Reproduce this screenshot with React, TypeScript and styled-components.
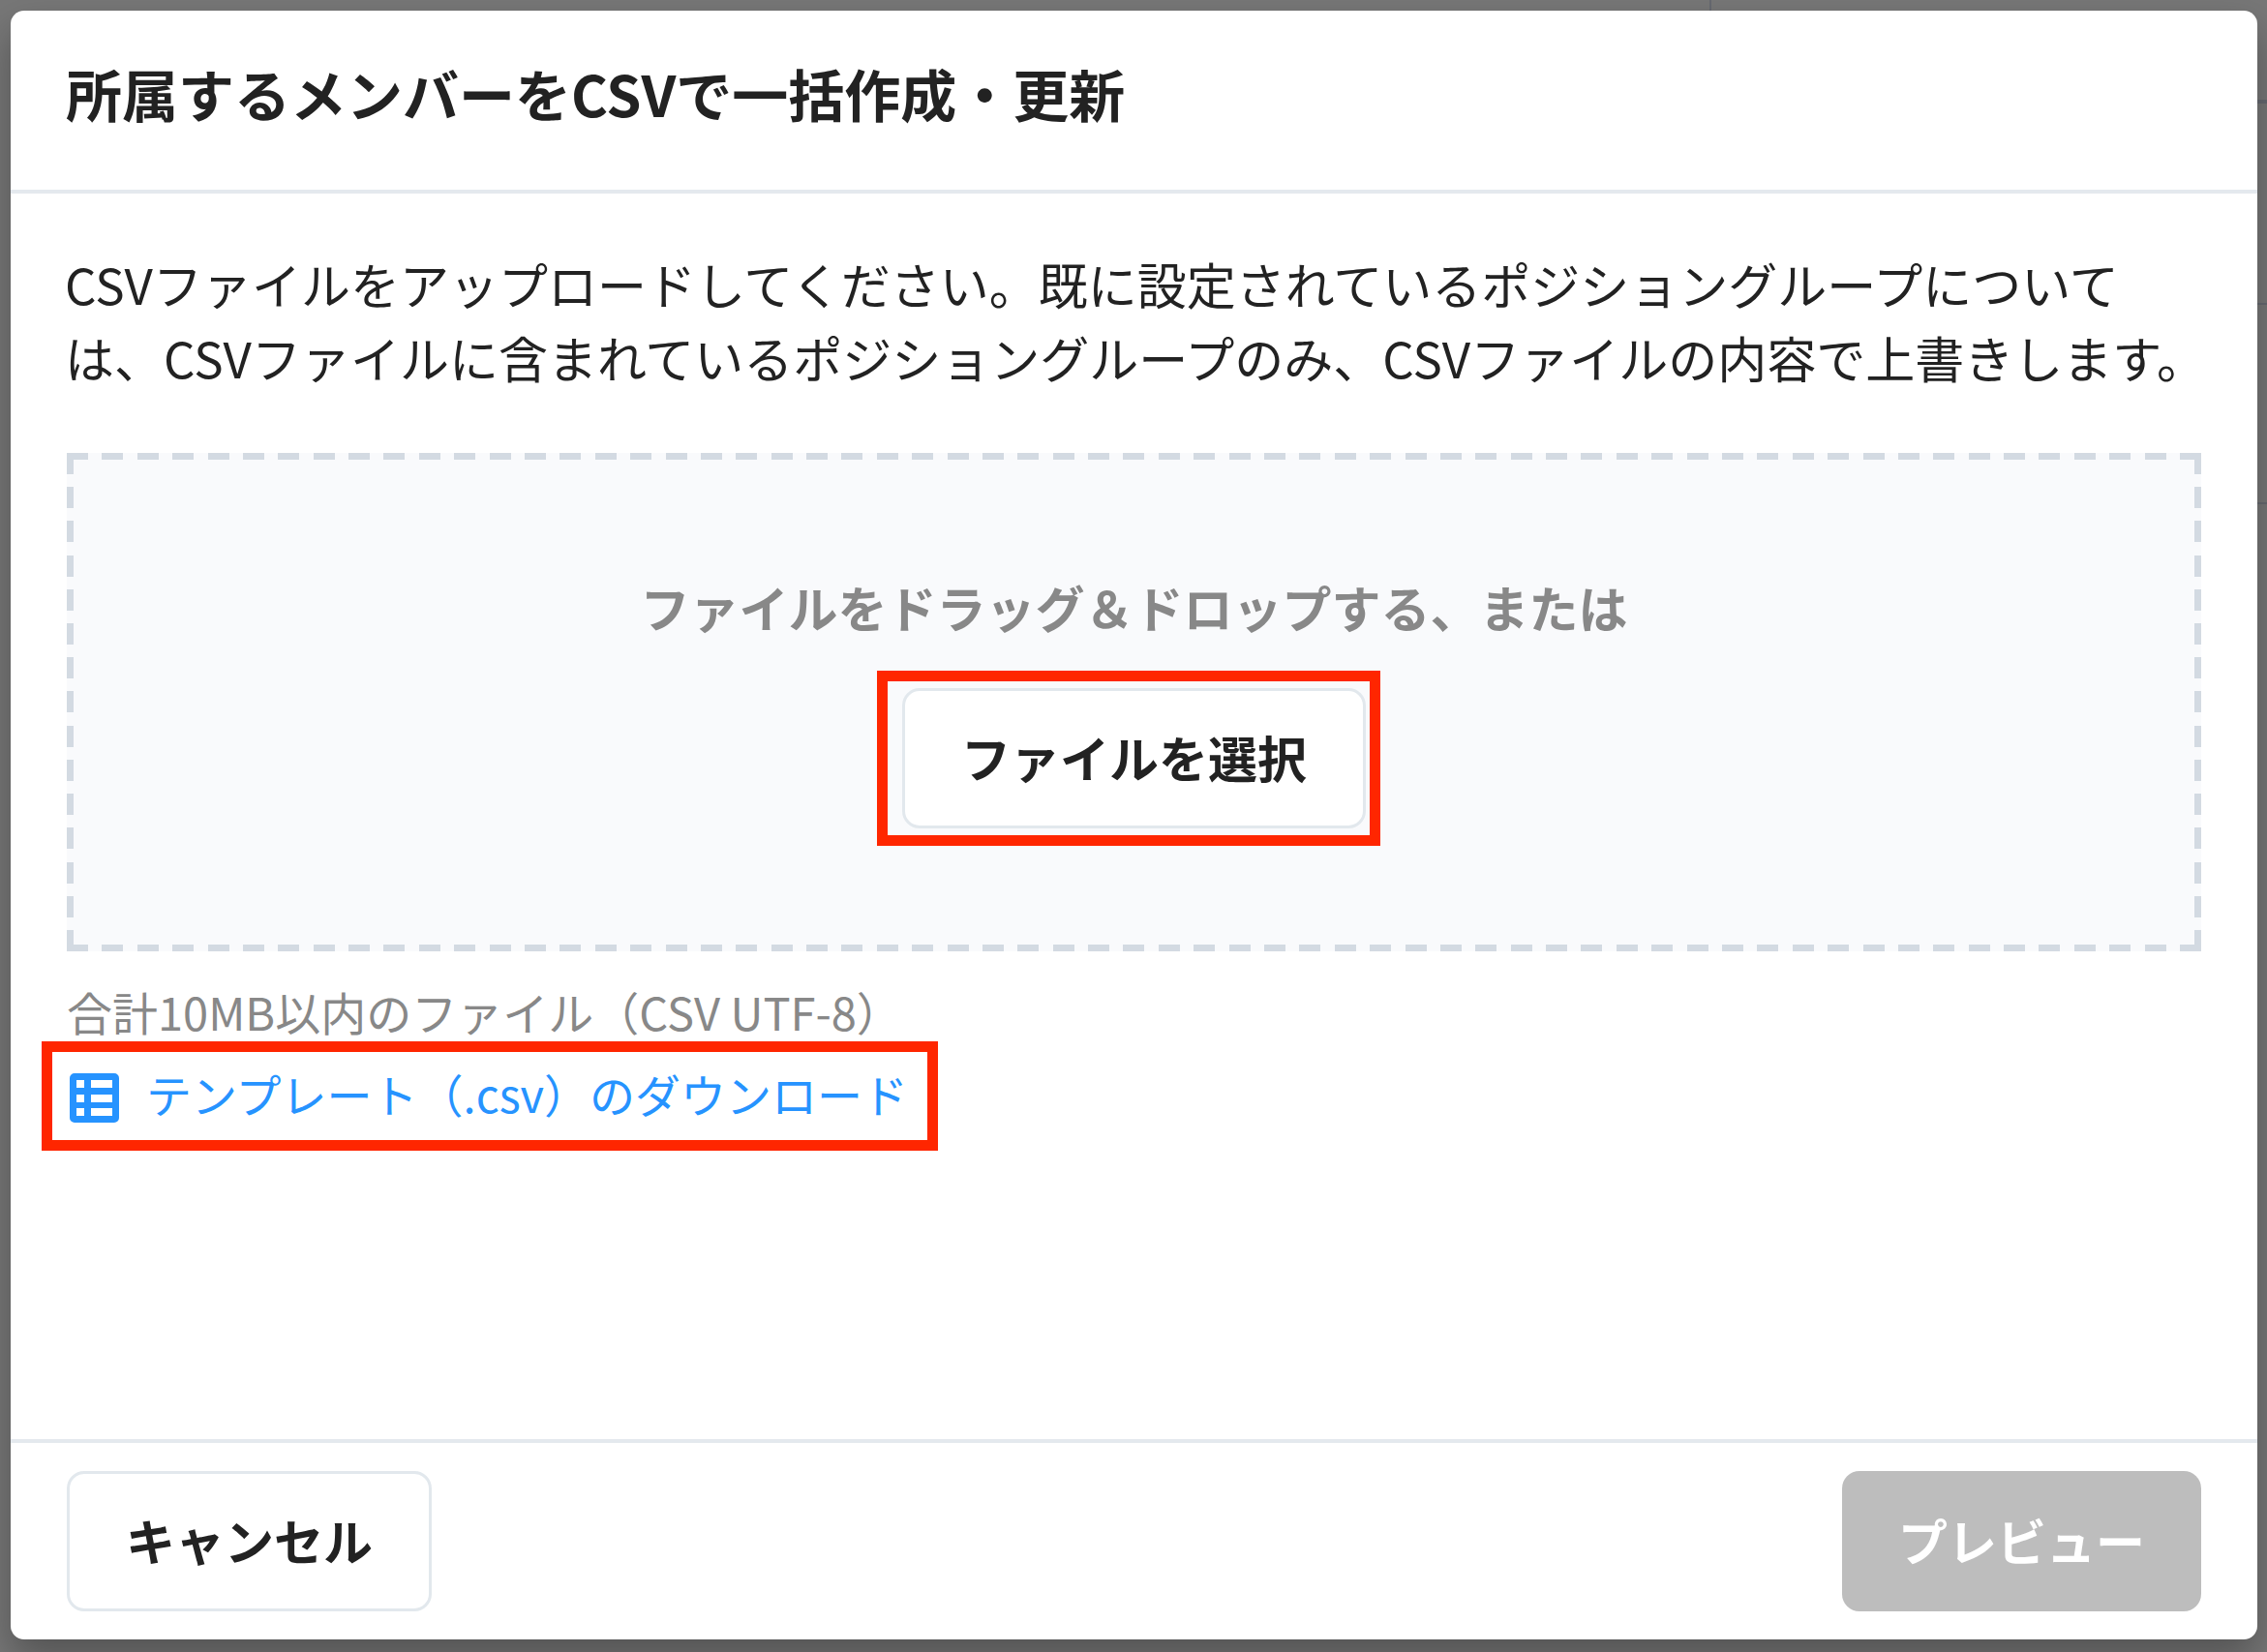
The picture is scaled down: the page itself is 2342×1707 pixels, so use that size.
import React from "react";
import styled, { createGlobalStyle } from "styled-components";

const GlobalStyle = createGlobalStyle`
  *, *::before, *::after { box-sizing: border-box; }
  body {
    margin: 0;
    background: #777777;
    color: #222222;
    font-family: "Noto Sans CJK JP", "Noto Sans", sans-serif;
    font-size: 51px;
    line-height: 76px;
  }
  button { font: inherit; }
  h1, p { margin: 0; }
`;

/* The dimmed page behind the dialog keeps faint traces of its column and row rules. */
const Backdrop = styled.div`
  --rule: linear-gradient(#666970, #666970);
  display: flex;
  min-height: 100vh;
  padding: 11px 10px 13px 11px;
  overflow: hidden;
  background:
    var(--rule) right 574px top 0 / 2px 11px no-repeat,
    var(--rule) right 0 top 103px / 10px 4px no-repeat,
    var(--rule) right 0 top 313px / 10px 2px no-repeat,
    var(--rule) right 0 top 519px / 10px 2px no-repeat,
    #777777;
`;

const Dialog = styled.section`
  display: flex;
  flex: 1;
  flex-direction: column;
  min-width: 0;
  border-radius: 14px;
  background: #ffffff;
  box-shadow: 0 20px 40px rgba(0, 0, 0, 0.3);
`;

const Header = styled.header`
  padding: 41px 57px 56px;
  border-bottom: 4px solid #e4e9ee;
`;

const Title = styled.h1`
  font-size: 58px;
  line-height: 88px;
  font-weight: 700;
`;

const Body = styled.div`
  display: flex;
  flex: 1;
  flex-direction: column;
  align-items: flex-start;
  padding: 55px 58px;
`;

const Description = styled.p`
  align-self: stretch;
  margin: 0 -24px 0 -2px;
`;

const DropZone = styled.div`
  --dash: #d3dae2;
  --across: repeating-linear-gradient(90deg, var(--dash) 0 22px, transparent 22px calc((100% - 22px) / 60));
  --down: repeating-linear-gradient(180deg, var(--dash) 0 22px, transparent 22px calc((100% - 22px) / 14));
  display: flex;
  flex-direction: column;
  align-items: center;
  align-self: stretch;
  gap: 28px;
  margin-top: 61px;
  padding: 121px 0 109px;
  background:
    var(--across) top / 100% 7px no-repeat,
    var(--across) bottom / 100% 7px no-repeat,
    var(--down) left / 7px 100% no-repeat,
    var(--down) right / 7px 100% no-repeat,
    #f9fafc;
`;

const DropText = styled.p`
  color: #888888;
  font-weight: 700;
`;

const Highlight = styled.div`
  border: 11px solid #ff2600;
`;

const PickerHighlight = styled(Highlight)`
  margin-right: 11px;
  padding: 7px 4px 7px 15px;
`;

const LinkHighlight = styled(Highlight)`
  margin: -4px 0 0 -26px;
  padding: 8px 20px 13px 18px;
`;

const Button = styled.button<{ $solid?: boolean }>`
  display: block;
  height: 145px;
  padding: 0 58px 3px;
  border: ${(p) => (p.$solid ? "0" : "3px solid #e2e8ed")};
  border-radius: 18px;
  background: ${(p) => (p.$solid ? "#bdbdbd" : "#ffffff")};
  color: ${(p) => (p.$solid ? "#ffffff" : "#222222")};
  font-weight: 700;
`;

const Hint = styled.p`
  margin-top: 27px;
  color: #888888;
  font-size: 47px;
  line-height: 70px;
`;

const TemplateLink = styled.a`
  display: flex;
  align-items: center;
  gap: 28px;
  color: #2693ff;
  font-size: 47px;
  line-height: 70px;
  text-decoration: none;

  svg { margin-top: 8px; }
`;

const Footer = styled.footer`
  display: flex;
  justify-content: space-between;
  padding: 29px 58px;
  border-top: 4px solid #e4e9ee;
`;

const SheetIcon = () => (
  <svg width="51" height="51" viewBox="0 0 51 51" fill="currentColor" aria-hidden="true">
    <path
      fillRule="evenodd"
      d="M5 0h41a5 5 0 0 1 5 5v41a5 5 0 0 1-5 5H5a5 5 0 0 1-5-5V5a5 5 0 0 1 5-5ZM7 7v8h8V7ZM22 7v8h22V7ZM7 22v8h8v-8ZM22 22v8h22v-8ZM7 36v8h8v-8ZM22 36v8h22v-8Z"
    />
  </svg>
);

export default function App() {
  return (
    <>
      <GlobalStyle />
      <Backdrop>
        <Dialog role="dialog" aria-labelledby="dialog-title">
          <Header>
            <Title id="dialog-title">所属するメンバーをCSVで一括作成・更新</Title>
          </Header>
          <Body>
            <Description>
              CSVファイルをアップロードしてください。既に設定されているポジショングループについて
              <br />
              は、CSVファイルに含まれているポジショングループのみ、CSVファイルの内容で上書きします。
            </Description>
            <DropZone>
              <DropText>ファイルをドラッグ＆ドロップする、または</DropText>
              <PickerHighlight>
                <Button type="button">ファイルを選択</Button>
              </PickerHighlight>
            </DropZone>
            <Hint>合計10MB以内のファイル（CSV UTF-8）</Hint>
            <LinkHighlight>
              <TemplateLink href="#template">
                <SheetIcon />
                テンプレート（.csv）のダウンロード
              </TemplateLink>
            </LinkHighlight>
          </Body>
          <Footer>
            <Button type="button">キャンセル</Button>
            <Button type="button" $solid disabled>
              プレビュー
            </Button>
          </Footer>
        </Dialog>
      </Backdrop>
    </>
  );
}
